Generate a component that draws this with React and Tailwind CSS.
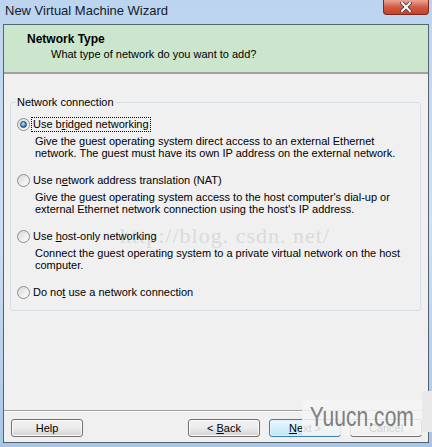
import React from 'react';

const font = { fontFamily: '"Liberation Sans", Arial, sans-serif' };

function Radio({ checked }) {
  return (
    <span className="flex h-[13px] w-[13px] shrink-0 items-center justify-center rounded-full border border-[#8d8d8d] bg-gradient-to-br from-[#d6d6d6] via-[#ececec] to-[#ffffff]">
      {checked && (
        <span className="h-[7px] w-[7px] rounded-full border border-[#1b3d5e] bg-[radial-gradient(circle_at_40%_35%,#bfe6ff,#3d8fd6_55%,#124a7e)]" />
      )}
    </span>
  );
}

const options = [
  {
    label: <>Use b<u>r</u>idged networking</>,
    desc: ['Give the guest operating system direct access to an external Ethernet', 'network. The guest must have its own IP address on the external network.'],
    checked: true,
  },
  {
    label: <>Use n<u>e</u>twork address translation (NAT)</>,
    desc: ["Give the guest operating system access to the host computer's dial-up or", "external Ethernet network connection using the host's IP address."],
  },
  {
    label: <>Use <u>h</u>ost-only networking</>,
    desc: ['Connect the guest operating system to a private virtual network on the host', 'computer.'],
  },
  {
    label: <>Do no<u>t</u> use a network connection</>,
    desc: [],
  },
];

function Button({ children, primary }) {
  return (
    <button
      className={
        primary
          ? 'h-[18px] w-[72px] rounded-[3px] border border-[#3c7fb1] bg-gradient-to-b from-[#eaf6fd] to-[#bee6fd] text-[11px] leading-none text-black shadow-[inset_0_0_0_1px_#dff2fc]'
          : 'h-[18px] w-[72px] rounded-[3px] border border-[#707070] bg-gradient-to-b from-[#f2f2f2] via-[#ebebeb] to-[#d2d2d2] text-[11px] leading-none text-black shadow-[inset_0_0_0_1px_#fbfbfb]'
      }
    >
      {children}
    </button>
  );
}

export default function App() {
  return (
    <div className="relative flex h-[447px] w-[432px] flex-col overflow-hidden bg-gradient-to-b from-[#bdd4ee] via-[#cfe0f4] to-[#a9c6e6]" style={font}>
      <div className="flex h-[24px] shrink-0 items-start justify-between">
        <div className="pl-[5px] pt-[3px] text-[13px] leading-[15px] text-[#10202e]">New Virtual Machine Wizard</div>
        <div className="mr-[3px] flex h-[15px] w-[46px] items-center justify-center rounded-b-[4px] border border-t-0 border-[#7a2a1d] bg-gradient-to-b from-[#e8a596] via-[#d25a43] to-[#c3442c]">
          <svg width="12" height="10" viewBox="0 0 12 10">
            <path d="M2 1 L10 9 M10 1 L2 9" stroke="#3b3b3b" strokeWidth="3.6" strokeLinecap="square" />
            <path d="M2 1 L10 9 M10 1 L2 9" stroke="#ffffff" strokeWidth="2" strokeLinecap="square" />
          </svg>
        </div>
      </div>

      <div className="mx-[3px] flex h-[419px] shrink-0 flex-col border border-[#55636f] bg-[#f0f0f0]">
        <div className="h-[49px] shrink-0 border-b-2 border-[#a0a0a0] bg-[#cbe6cc] pl-[23px] pt-[7px]">
          <div className="text-[12px] font-bold leading-[15px] text-black">Network Type</div>
          <div className="pl-[24px] text-[11px] leading-[15px] text-black">What type of network do you want to add?</div>
        </div>

        <div className="relative ml-[6px] mr-[7px] mt-[28px] rounded-[3px] border border-[#d5dfe5] pb-[10px] pl-[6px] pt-[13px]">
          <div className="pointer-events-none absolute left-[109px] top-[120px] whitespace-nowrap text-[22px] leading-[26px] tracking-[1px] text-[#dadada]" style={{ fontFamily: '"Liberation Serif", serif' }}>
            http://blog. csdn. net/
          </div>
          <span className="absolute -top-[8px] left-[5px] bg-[#f0f0f0] px-[1px] text-[11px] leading-[14px] text-black">Network connection</span>
          <div className="relative flex flex-col gap-[13px]">
            {options.map((o, i) => (
              <div key={i}>
                <div className="flex h-[16px] items-center gap-[2px]">
                  <Radio checked={o.checked} />
                  <span className={`px-[1px] text-[11px] leading-[13px] text-black ${o.checked ? 'outline outline-1 outline-dotted outline-black' : ''}`}>{o.label}</span>
                </div>
                {o.desc.length > 0 && (
                  <div className="mt-[3px] whitespace-nowrap pl-[18px] text-[11px] leading-[12px] text-black">
                    {o.desc.map((d, j) => (
                      <div key={j}>{d}</div>
                    ))}
                  </div>
                )}
              </div>
            ))}
          </div>
        </div>

        <div className="mt-auto flex items-start border-t border-[#a0a0a0] pb-[5px] pl-[7px] pr-[6px] pt-[8px] shadow-[inset_0_1px_0_#ffffff]">
          <Button>Help</Button>
          <div className="ml-auto flex gap-[9px]">
            <Button>&lt; <u>B</u>ack</Button>
            <Button primary><u>N</u>ext &gt;</Button>
            <Button>Cancel</Button>
          </div>
        </div>
      </div>

      <div className="pointer-events-none absolute left-[302px] top-[400px] flex h-[35px] w-[120px] items-center justify-center bg-[#f4f4f4]/85">
        <span className="origin-center scale-x-[0.78] text-[27px] leading-none text-[#808080]">Yuucn.com</span>
      </div>
      <div className="pointer-events-none absolute left-[422px] top-[391px] h-[41px] w-[10px] bg-[#e9e9e9]" />
    </div>
  );
}
